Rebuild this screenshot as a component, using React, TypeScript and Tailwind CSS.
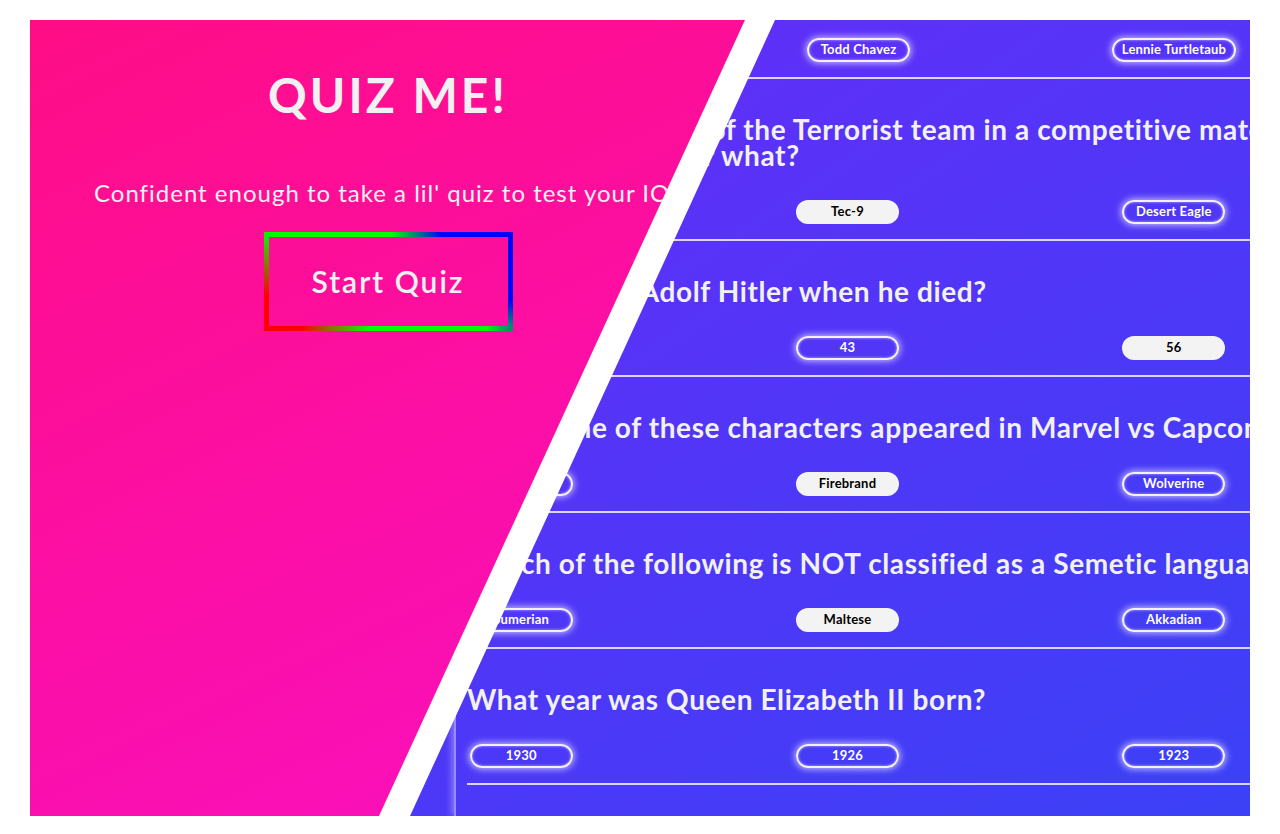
type Option = { label: string; picked?: boolean }
type Question = { lines: string[]; options: Option[] }

const questions: Question[] = [
  {
    lines: ["Which character from BoJack Horseman was never an agent?"],
    options: [{ label: "Katrina Peanutbutter" }, { label: "Todd Chavez" }, { label: "Lennie Turtletaub" }],
  },
  {
    lines: [
      "The Default Pistol of the Terrorist team in a competitive match is the Glock-18, but the CZ75-Auto",
      "which is a swap for what?",
    ],
    options: [{ label: "P250" }, { label: "Tec-9", picked: true }, { label: "Desert Eagle" }],
  },
  {
    lines: ["How old was Adolf Hitler when he died?"],
    options: [{ label: "48" }, { label: "43" }, { label: "56", picked: true }],
  },
  {
    lines: ["Which one of these characters appeared in Marvel vs Capcom 2?"],
    options: [{ label: "Dante" }, { label: "Firebrand", picked: true }, { label: "Wolverine" }],
  },
  {
    lines: ["Which of the following is NOT classified as a Semetic language?"],
    options: [{ label: "Sumerian" }, { label: "Maltese", picked: true }, { label: "Akkadian" }],
  },
  {
    lines: ["What year was Queen Elizabeth II born?"],
    options: [{ label: "1930" }, { label: "1926" }, { label: "1923" }],
  },
  {
    lines: ["Which planet has the most moons?"],
    options: [{ label: "Saturn" }, { label: "Jupiter" }, { label: "Uranus" }],
  },
]

function Answer({ label, picked }: Option) {
  const base =
    "h-6 min-w-[103px] px-2 rounded-full border-2 flex items-center justify-center text-[13px] tracking-[0.2px] font-bold whitespace-nowrap"
  return picked ? (
    <span className={`${base} bg-[#f3f3f3] border-[#f3f3f3] text-black`}>{label}</span>
  ) : (
    <span
      className={`${base} border-[#f4f0ff] text-white shadow-[0_0_7px_1px_rgba(255,255,255,0.7),inset_0_0_3px_rgba(255,255,255,0.6)]`}
    >
      {label}
    </span>
  )
}

function QuestionRow({ q }: { q: Question }) {
  return (
    <div className="ml-[11px] pt-[37px] pb-[15px] border-b-2 border-[#dcd6ff]">
      <div className="text-[28px] leading-[26px] tracking-[0.6px] font-bold text-[#f1f1f1] whitespace-nowrap">
        {q.lines.map((l, i) => (
          <div key={i}>{l}</div>
        ))}
      </div>
      <div className="mt-[32px] -ml-[109px] w-[979px] flex justify-around items-center">
        {q.options.map((o, i) => (
          <Answer key={i} {...o} />
        ))}
      </div>
    </div>
  )
}

export default function App() {
  return (
    <div className="min-h-screen bg-white pt-[20px] px-[30px] font-['Lato',sans-serif]">
      <div className="relative h-[796px] overflow-hidden bg-[linear-gradient(to_bottom_right,#6d28f9,#3b41f6)]">
        {/* question list */}
        <div className="h-full pl-[424px]">
          <div className="h-full flex flex-col border-l-2 border-[#9a8cfb] shadow-[-3px_0_6px_rgba(255,255,255,0.3)]">
            <div className="-mt-[77px] w-[900px]">
              {questions.map((q, i) => (
                <QuestionRow key={i} q={q} />
              ))}
            </div>
          </div>
        </div>

        {/* white stripe */}
        <div className="absolute inset-0 bg-white [clip-path:polygon(0_0,745px_0,380px_100%,0_100%)]" />

        {/* pink side */}
        <div className="absolute inset-0 bg-[linear-gradient(155deg,#ff0d86,#f711cc)] [clip-path:polygon(0_0,715px_0,349px_100%,0_100%)]">
          <div className="w-[716px] flex flex-col items-center pt-[51px] text-[#f1f1f1]">
            <h1 className="text-[48px] leading-[48px] font-bold tracking-[3px]">QUIZ ME!</h1>
            <p className="mt-[59px] text-[24px] leading-[30px] tracking-[1px] whitespace-nowrap">
              Confident enough to take a lil' quiz to test your IQ?
            </p>
            <button className="mt-[24px] w-[249px] h-[99px] border-[5px] [border-image:linear-gradient(45deg,#ff0000_10%,#00ff00_30%,#00ff00_65%,#0000ff_80%)_1] text-[30px] font-semibold tracking-[2px] text-[#f1f1f1]">
              Start Quiz
            </button>
          </div>
        </div>
      </div>
    </div>
  )
}
